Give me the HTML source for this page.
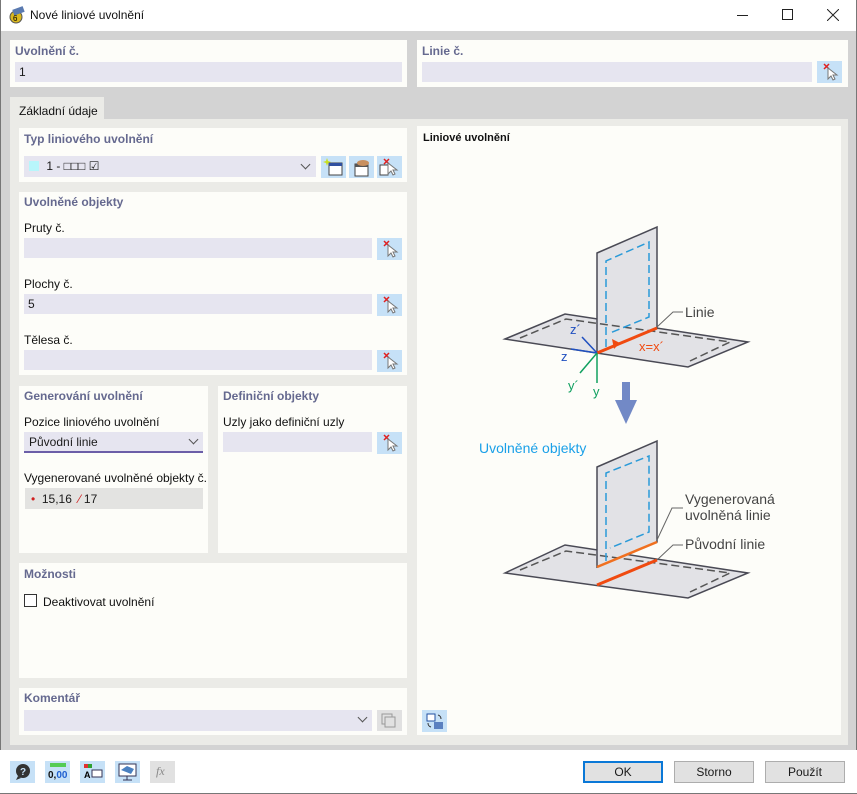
<!DOCTYPE html>
<html><head><meta charset="utf-8"><style>
*{box-sizing:border-box;margin:0;padding:0}
body{width:857px;height:794px;position:relative;background:#d3d3d3;font-family:"Liberation Sans","DejaVu Sans",sans-serif;font-size:12px;color:#1a1a1a;overflow:hidden}
.a{position:absolute}
.p{position:absolute;background:#fdfdf9}
.h{position:absolute;font-weight:bold;color:#65698f;font-size:12px}
.l{position:absolute;font-size:12px;color:#111}
.in{position:absolute;background:#e6e5f0;height:20px;font-size:12px;padding:3px 4px}
.b{position:absolute;width:25px;height:22px;background:#c6e1f7}
.b svg{position:absolute;left:0;top:0}
.chev{position:absolute;width:7px;height:7px;border-right:1px solid #555;border-bottom:1px solid #555;transform:rotate(45deg)}
.btn{position:absolute;top:761px;width:80px;height:22px;background:#e1e1e1;border:1px solid #adadad;text-align:center;line-height:20px;font-size:12px}
</style></head><body>
<svg width="0" height="0" style="position:absolute"><defs>
<g id="cur"><path d="M7 3l5 5M12 3l-5 5" stroke="#e02020" stroke-width="1.5"/><path d="M11 7v11l3-3 2 4 2-1-2-4h4z" fill="#fff" stroke="#777" stroke-width="1"/></g>
</defs></svg>
<div class="a" style="left:0;top:0;width:857px;height:31px;background:#fff"></div>
<div class="a" style="left:0;top:0;width:1px;height:794px;background:#777"></div>
<div class="a" style="left:856px;top:0;width:1px;height:794px;background:#777"></div>
<svg class="a" style="left:8px;top:6px" width="18" height="18"><circle cx="8" cy="11" r="6" fill="#d9b820" stroke="#555"/><rect x="5" y="2" width="11" height="6" fill="#5a7ab0" transform="rotate(-20 10 5)"/><text x="5" y="15" font-size="8" font-family="Liberation Sans">6</text></svg>
<div class="l" style="left:30px;top:8px;font-size:12px">Nové liniové uvolnění</div>
<div class="a" style="left:737px;top:15px;width:11px;height:1px;background:#222"></div>
<div class="a" style="left:782px;top:9px;width:11px;height:11px;border:1px solid #222"></div>
<svg class="a" style="left:827px;top:9px" width="12" height="12"><path d="M0 0L12 12M12 0L0 12" stroke="#222"/></svg>

<div class="p" style="left:10px;top:40px;width:397px;height:47px"></div>
<div class="h" style="left:15px;top:44px">Uvolnění č.</div>
<div class="in" style="left:15px;top:62px;width:387px">1</div>
<div class="p" style="left:417px;top:40px;width:431px;height:47px"></div>
<div class="h" style="left:422px;top:44px">Linie č.</div>
<div class="in" style="left:422px;top:62px;width:390px"></div>
<div class="b" style="left:817px;top:61px"><svg width="25" height="22"><use href="#cur"/></svg></div>

<div class="a" style="left:10px;top:97px;width:94px;height:23px;background:#ebebe7"></div>
<div class="l" style="left:19px;top:104px">Základní údaje</div>
<div class="a" style="left:10px;top:119px;width:838px;height:626px;background:#ebebe7"></div>

<div class="p" style="left:19px;top:128px;width:388px;height:54px"></div>
<div class="h" style="left:24px;top:132px">Typ liniového uvolnění</div>
<div class="in" style="left:24px;top:156px;width:292px;height:21px"><span style="display:inline-block;width:10px;height:10px;background:#b8f6fb;vertical-align:-1px;margin:0 4px 0 1px"></span> 1 - □□□ ☑</div>
<div class="chev" style="left:302px;top:161px"></div>
<div class="b" style="left:321px;top:156px"><svg width="25" height="22"><rect x="8" y="7" width="13" height="12" fill="#fff" stroke="#444"/><rect x="8" y="7" width="13" height="3" fill="#3050a0"/><path d="M6 2l1 3 3 1-3 1-1 3-1-3-3-1 3-1z" fill="#c8e020"/></svg></div>
<div class="b" style="left:349px;top:156px"><svg width="25" height="22"><rect x="6" y="8" width="13" height="12" fill="#fff" stroke="#444"/><rect x="6" y="8" width="13" height="3" fill="#555"/><ellipse cx="14" cy="7" rx="6" ry="3" fill="#c89060"/></svg></div>
<div class="b" style="left:377px;top:156px"><svg width="25" height="22"><rect x="3" y="9" width="8" height="10" fill="#fff" stroke="#444"/><use href="#cur"/></svg></div>

<div class="p" style="left:19px;top:192px;width:388px;height:183px"></div>
<div class="h" style="left:24px;top:195px">Uvolněné objekty</div>
<div class="l" style="left:24px;top:221px">Pruty č.</div>
<div class="in" style="left:24px;top:238px;width:348px"></div><div class="b" style="left:377px;top:238px"><svg width="25" height="22"><use href="#cur"/></svg></div>
<div class="l" style="left:24px;top:277px">Plochy č.</div>
<div class="in" style="left:24px;top:294px;width:348px">5</div><div class="b" style="left:377px;top:294px"><svg width="25" height="22"><use href="#cur"/></svg></div>
<div class="l" style="left:24px;top:333px">Tělesa č.</div>
<div class="in" style="left:24px;top:350px;width:348px"></div><div class="b" style="left:377px;top:350px"><svg width="25" height="22"><use href="#cur"/></svg></div>

<div class="p" style="left:19px;top:386px;width:189px;height:167px"></div>
<div class="h" style="left:24px;top:389px">Generování uvolnění</div>
<div class="l" style="left:24px;top:415px">Pozice liniového uvolnění</div>
<div class="in" style="left:24px;top:432px;width:179px;height:21px;border-bottom:2px solid #6b5ea8;padding-left:5px">Původní linie</div>
<div class="chev" style="left:190px;top:436px"></div>
<div class="l" style="left:24px;top:471px">Vygenerované uvolněné objekty č.</div>
<div class="a" style="left:25px;top:488px;width:178px;height:21px;background:#e3e3e1;padding:4px 6px;font-size:12px"><span style="color:#d02020">•</span>&nbsp; 15,16 &nbsp;<span style="color:#d02020">⁄</span> 17</div>

<div class="p" style="left:218px;top:386px;width:189px;height:167px"></div>
<div class="h" style="left:223px;top:389px">Definiční objekty</div>
<div class="l" style="left:223px;top:415px">Uzly jako definiční uzly</div>
<div class="in" style="left:223px;top:432px;width:149px"></div><div class="b" style="left:377px;top:432px"><svg width="25" height="22"><use href="#cur"/></svg></div>

<div class="p" style="left:19px;top:563px;width:388px;height:115px"></div>
<div class="h" style="left:24px;top:567px">Možnosti</div>
<div class="a" style="left:24px;top:594px;width:13px;height:13px;border:1px solid #333;background:#fff"></div>
<div class="l" style="left:43px;top:595px">Deaktivovat uvolnění</div>

<div class="p" style="left:19px;top:688px;width:388px;height:47px"></div>
<div class="h" style="left:24px;top:691px">Komentář</div>
<div class="in" style="left:24px;top:710px;width:348px;height:21px"></div>
<div class="chev" style="left:359px;top:714px"></div>
<div class="a" style="left:377px;top:710px;width:25px;height:21px;background:#e1e1e1"><svg width="25" height="21"><rect x="5" y="4" width="10" height="10" fill="none" stroke="#999"/><rect x="8" y="7" width="10" height="10" fill="#e1e1e1" stroke="#999"/></svg></div>

<div class="p" style="left:417px;top:126px;width:424px;height:609px"></div>
<div class="l" style="left:423px;top:132px;font-weight:bold;font-size:11px">Liniové uvolnění</div>
<div class="b" style="left:422px;top:710px"><svg width="25" height="22"><rect x="5" y="4" width="8" height="7" fill="#fff" stroke="#2050a0"/><rect x="12" y="12" width="9" height="7" fill="#5a80c0"/><path d="M16 5a4 4 0 0 1 3 4M9 17a4 4 0 0 1-3-4" stroke="#333" fill="none"/></svg></div>

<svg class="a" style="left:0;top:0" width="857" height="794" font-family="Liberation Sans">
<g stroke="#4a4a55" stroke-width="1.5" fill="#e2e2e6">
<polygon points="505,339 565,314 748,342 688,367"/>
<polygon points="597,253 657,227 657,328 597,353"/>
</g>
<polyline points="520,338 566,319 730,342 690,361" fill="none" stroke="#555" stroke-dasharray="8,4" stroke-width="1.5"/>
<polyline points="606,347 606,261 649,242 649,317 610,333" fill="none" stroke="#2a9ad8" stroke-dasharray="8,4" stroke-width="1.5"/>
<line x1="597" y1="353" x2="657" y2="328" stroke="#f04a10" stroke-width="3"/>
<polygon points="620,343 612,339 614,349" fill="#f04a10"/>
<line x1="597" y1="353" x2="571" y2="349" stroke="#2050c0" stroke-width="1.5"/>
<line x1="597" y1="353" x2="582" y2="337" stroke="#2050c0" stroke-width="1.5"/>
<line x1="597" y1="353" x2="597" y2="383" stroke="#10a060" stroke-width="1.5"/>
<line x1="597" y1="353" x2="580" y2="373" stroke="#10a060" stroke-width="1.5"/>
<text x="570" y="334" fill="#2050c0" font-size="13">z´</text>
<text x="561" y="361" fill="#2050c0" font-size="13">z</text>
<text x="568" y="390" fill="#10a060" font-size="13">y´</text>
<text x="593" y="396" fill="#10a060" font-size="13">y</text>
<text x="639" y="351" fill="#f04a10" font-size="13">x=x´</text>
<polyline points="657,327 673,312 683,312" fill="none" stroke="#666"/>
<text x="685" y="317" fill="#444" font-size="14">Linie</text>
<rect x="622" y="382" width="8" height="20" fill="#7289c6"/>
<polygon points="615,400 637,400 626,424" fill="#7289c6"/>
<text x="479" y="453" fill="#1aa0e8" font-size="14">Uvolněné objekty</text>
<g stroke="#4a4a55" stroke-width="1.5" fill="#e2e2e6">
<polygon points="505,573 565,545 748,573 688,598"/>
<polygon points="597,467 657,441 657,542 597,567"/>
</g>
<polyline points="520,570 566,551 730,573 690,592" fill="none" stroke="#555" stroke-dasharray="8,4" stroke-width="1.5"/>
<polyline points="606,561 606,473 649,456 649,532 610,548" fill="none" stroke="#2a9ad8" stroke-dasharray="8,4" stroke-width="1.5"/>
<line x1="597" y1="567" x2="657" y2="542" stroke="#f07020" stroke-width="2.5"/>
<line x1="597" y1="585" x2="657" y2="560" stroke="#f04a10" stroke-width="3"/>
<polyline points="657,540 672,508 683,508" fill="none" stroke="#666"/>
<polyline points="657,560 673,545 683,545" fill="none" stroke="#666"/>
<text x="685" y="504" fill="#444" font-size="14">Vygenerovaná</text>
<text x="685" y="520" fill="#444" font-size="14">uvolněná linie</text>
<text x="685" y="549" fill="#444" font-size="14">Původní linie</text>
</svg>

<div class="a" style="left:0;top:750px;width:857px;height:44px;background:#fff"></div>
<div class="a" style="left:0;top:793px;width:857px;height:1px;background:#777"></div>
<div class="b" style="left:10px;top:761px"><svg width="25" height="22"><circle cx="13" cy="10" r="7" fill="#333"/><path d="M8 15l-2 4 5-2z" fill="#333"/><text x="10" y="14" font-size="10" fill="#c6e1f7" font-weight="bold">?</text></svg></div>
<div class="b" style="left:45px;top:761px"><svg width="25" height="22"><rect x="5" y="2" width="16" height="4" fill="#5c5"/><text x="3" y="17" font-size="10" font-weight="bold" fill="#111">0,<tspan fill="#2060d0">00</tspan></text></svg></div>
<div class="b" style="left:80px;top:761px"><svg width="25" height="22"><rect x="4" y="3" width="4" height="4" fill="#e03030"/><rect x="8" y="3" width="4" height="4" fill="#30a030"/><text x="4" y="17" font-size="9" font-weight="bold">A</text><rect x="12" y="9" width="10" height="7" fill="#fff" stroke="#335"/></svg></div>
<div class="b" style="left:115px;top:761px"><svg width="25" height="22"><rect x="4" y="3" width="17" height="12" fill="#fff" stroke="#335"/><path d="M6 9l6-4 7 3-3 5z" fill="#4a80c0"/><path d="M12 15v4M8 19h9" stroke="#335"/></svg></div>
<div class="a" style="left:150px;top:761px;width:25px;height:22px;background:#e1e1e1"></div>
<div class="l" style="left:156px;top:764px;font-style:italic;color:#888;font-family:'Liberation Serif'">fx</div>
<div class="btn" style="left:583px;border:2px solid #0a78d7;line-height:18px">OK</div>
<div class="btn" style="left:674px">Storno</div>
<div class="btn" style="left:765px">Použít</div>
</body></html>
